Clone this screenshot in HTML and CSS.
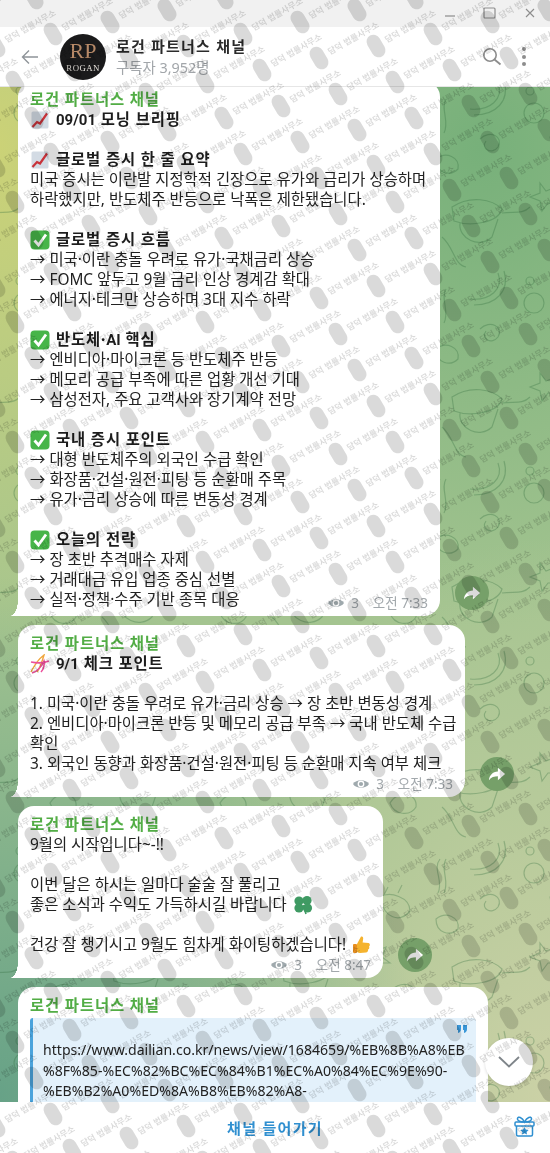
FILE: index.html
```html
<!DOCTYPE html>
<html lang="ko">
<head>
    <meta charset="UTF-8" />
    <title>로건 파트너스 채널</title>
    <link rel="stylesheet" href="styles.css">
</head>
<body>

<svg class="sprites" width="0" height="0" aria-hidden="true">
    <defs>
        <symbol id="i-chart" viewBox="0 0 18 18">
            <rect x="0.5" y="0.5" width="17" height="17" rx="1.5" fill="#d3dbe4"/>
            <path d="M1.5 16 L6 11 L9 12.5 L16 2.5" fill="none" stroke="#c8333a" stroke-width="2.2"/>
        </symbol>
        <symbol id="i-check" viewBox="0 0 20 20">
            <rect x="0.5" y="0.5" width="19" height="19" rx="4" fill="#47b549"/>
            <path d="M4.5 10.5 L8.5 15 L16 4.5" fill="none" stroke="#fff" stroke-width="2.8"/>
        </symbol>
        <symbol id="i-ribbon" viewBox="0 0 20 20">
            <path d="M1 18 C4 12 10 4 14 1 C12 8 10 14 7 18" fill="none" stroke="#f0a63c" stroke-width="1.4"/>
            <path d="M1 8 C6 9 14 9 19 7 M2 19 C7 18 12 12 14 7 C15 11 13 16 11 18" fill="none" stroke="#ec4f9b" stroke-width="1.6"/>
        </symbol>
        <symbol id="i-eye" viewBox="0 0 18 12">
            <path d="M1 6 C4 1 14 1 17 6 C14 11 4 11 1 6 Z" fill="#9fa9ad"/>
            <circle cx="9" cy="6" r="3.4" fill="#fff"/>
            <circle cx="9" cy="6" r="2.1" fill="#9fa9ad"/>
        </symbol>
        <symbol id="i-forward" viewBox="0 0 20 20">
            <path d="M11 3 L19 10 L11 17 L11 12.6 C7 12.6 3.5 13.6 1 17 C1.6 11.4 5 7.6 11 7.2 Z" fill="#fff"/>
        </symbol>
        <g id="wm">
            <g transform="rotate(-30)">
                <rect x="-7" y="-12" width="14" height="24" rx="7" fill="#000"/>
                <text class="wm-text" x="11" y="3">담덕 법률사무소</text>
            </g>
        </g>
        <g id="wm-tile">
            <use href="#wm" x="0" y="0"/>
            <use href="#wm" x="133" y="12"/>
            <use href="#wm" x="76" y="24"/>
            <use href="#wm" x="19" y="36"/>
            <use href="#wm" x="152" y="48"/>
            <use href="#wm" x="95" y="60"/>
            <use href="#wm" x="38" y="72"/>
            <use href="#wm" x="171" y="84"/>
            <use href="#wm" x="114" y="96"/>
            <use href="#wm" x="57" y="108"/>
        </g>
        <pattern id="wm-pattern" width="190" height="120" patternUnits="userSpaceOnUse" patternTransform="translate(357 250)">
            <use href="#wm-tile" x="-190" y="-120"/>
            <use href="#wm-tile" x="0" y="-120"/>
            <use href="#wm-tile" x="190" y="-120"/>
            <use href="#wm-tile" x="-190" y="0"/>
            <use href="#wm-tile" x="0" y="0"/>
            <use href="#wm-tile" x="190" y="0"/>
            <use href="#wm-tile" x="-190" y="120"/>
            <use href="#wm-tile" x="0" y="120"/>
            <use href="#wm-tile" x="190" y="120"/>
        </pattern>
        <pattern id="doodle" width="170" height="190" patternUnits="userSpaceOnUse" patternTransform="translate(430 90)">
            <g fill="none" stroke="#2f6b3c" stroke-width="1.2">
                <path d="M22 30 C40 18 62 22 72 32 C68 46 40 50 24 44 Z M30 46 C28 62 50 72 62 60 L68 42 M72 36 C84 34 92 38 100 30"/>
                <path d="M12 60 C24 70 24 88 36 90 M130 56 C138 42 158 46 156 60 C150 70 134 68 130 56 Z"/>
                <path d="M68 96 C74 112 60 124 40 122 M74 94 C80 114 66 128 44 128"/>
                <circle cx="100" cy="104" r="4"/>
                <circle cx="104" cy="126" r="10"/>
                <path d="M10 112 C2 122 14 134 8 146 M16 112 C10 122 20 134 14 146"/>
                <path d="M50 152 C60 142 74 150 68 160 C62 168 50 162 56 154"/>
                <path d="M120 150 C130 144 150 150 150 164 C140 176 124 172 120 150 Z M124 148 L128 140 M138 146 L142 138"/>
                <path d="M6 172 C16 164 30 170 28 182 C20 190 6 186 6 172 Z"/>
                <path d="M110 6 L116 14 L126 10 L122 20 L130 26 L118 26 L112 34 L110 24 L100 20 L110 16 Z"/>
            </g>
        </pattern>
    </defs>
</svg>

<div class="page">

    <div class="titlebar">
        <svg class="win-icon" width="12" height="12" viewBox="0 0 12 12"><path d="M1 9 H11" stroke="#8d8d8d" stroke-width="1.2"/></svg>
        <svg class="win-icon" width="14" height="12" viewBox="0 0 14 12"><rect x="1" y="1" width="11" height="10" rx="1" fill="none" stroke="#8d8d8d" stroke-width="1.2"/></svg>
        <svg class="win-icon" width="12" height="12" viewBox="0 0 12 12"><path d="M2 2 L10 10 M10 2 L2 10" stroke="#8d8d8d" stroke-width="1.1"/></svg>
    </div>

    <div class="header">
        <svg class="back" width="18" height="16" viewBox="0 0 18 16"><path d="M17 8 H1.5 M8 1.5 L1.5 8 L8 14.5" fill="none" stroke="#8f9499" stroke-width="1.4"/></svg>
        <svg class="avatar" width="46" height="46" viewBox="0 0 46 46">
            <circle cx="23" cy="23" r="23" fill="#1a1a1b"/>
            <text class="avatar-logo" x="23" y="24">RP</text>
            <text class="avatar-name" x="23" y="37">ROGAN</text>
        </svg>
        <div class="header-info">
            <div class="channel-title">로건 파트너스 채널</div>
            <div class="subs">구독자 3,952명</div>
        </div>
        <svg class="search" width="20" height="20" viewBox="0 0 20 20"><circle cx="8" cy="8" r="6.2" fill="none" stroke="#8d8d8d" stroke-width="1.6"/><path d="M12.5 12.5 L18.5 17.5" stroke="#8d8d8d" stroke-width="1.8"/></svg>
        <div class="dots"><span></span><span></span><span></span></div>
    </div>

    <div class="chat">
        <svg class="doodles" aria-hidden="true"><rect width="100%" height="100%" fill="url(#doodle)"/></svg>

        <div class="row row-first">
            <div class="bubble w1">
                <div class="name">로건 파트너스 채널</div>
                <div class="msg">
                    <b><svg class="emoji chart"><use href="#i-chart"/></svg><span class="num">09/01</span> 모닝 브리핑</b><br>
                    <br>
                    <b><svg class="emoji chart"><use href="#i-chart"/></svg>글로벌 증시 한 줄 요약</b><br>
                    미국 증시는 이란발 지정학적 긴장으로 유가와 금리가 상승하며<br>
                    하락했지만, 반도체주 반등으로 낙폭은 제한됐습니다.<br>
                    <br>
                    <b><svg class="emoji"><use href="#i-check"/></svg>글로벌 증시 흐름</b><br>
                    → 미국·이란 충돌 우려로 유가·국채금리 상승<br>
                    → FOMC 앞두고 9월 금리 인상 경계감 확대<br>
                    → 에너지·테크만 상승하며 3대 지수 하락<br>
                    <br>
                    <b><svg class="emoji"><use href="#i-check"/></svg>반도체·<span class="num">AI</span> 핵심</b><br>
                    → 엔비디아·마이크론 등 반도체주 반등<br>
                    → 메모리 공급 부족에 따른 업황 개선 기대<br>
                    → 삼성전자, 주요 고객사와 장기계약 전망<br>
                    <br>
                    <b><svg class="emoji"><use href="#i-check"/></svg>국내 증시 포인트</b><br>
                    → 대형 반도체주의 외국인 수급 확인<br>
                    → 화장품·건설·원전·피팅 등 순환매 주목<br>
                    → 유가·금리 상승에 따른 변동성 경계<br>
                    <br>
                    <b><svg class="emoji"><use href="#i-check"/></svg>오늘의 전략</b><br>
                    → 장 초반 추격매수 자제<br>
                    → 거래대금 유입 업종 중심 선별<br>
                    → 실적·정책·수주 기반 종목 대응
                </div>
                <div class="meta meta-inline"><svg class="eye"><use href="#i-eye"/></svg><span class="views">3</span><span>오전 7:33</span></div>
            </div>
            <div class="fwd"><svg width="18" height="18"><use href="#i-forward"/></svg></div>
        </div>

        <div class="row">
            <div class="bubble w2">
                <div class="name">로건 파트너스 채널</div>
                <div class="msg">
                    <b><svg class="emoji"><use href="#i-ribbon"/></svg><span class="num">9/1</span> 체크 포인트</b><br>
                    <br>
                    1. 미국·이란 충돌 우려로 유가·금리 상승 → 장 초반 변동성 경계<br>
                    2. 엔비디아·마이크론 반등 및 메모리 공급 부족 → 국내 반도체 수급<br>
                    확인<br>
                    3. 외국인 동향과 화장품·건설·원전·피팅 등 순환매 지속 여부 체크
                </div>
                <div class="meta"><svg class="eye"><use href="#i-eye"/></svg><span class="views">3</span><span>오전 7:33</span></div>
            </div>
            <div class="fwd"><svg width="18" height="18"><use href="#i-forward"/></svg></div>
        </div>

        <div class="row">
            <div class="bubble w3">
                <div class="name">로건 파트너스 채널</div>
                <div class="msg">
                    9월의 시작입니다~-!!<br>
                    <br>
                    이번 달은 하시는 일마다 술술 잘 풀리고<br>
                    좋은 소식과 수익도 가득하시길 바랍니다
                    <svg class="emoji after" viewBox="0 0 20 20"><g fill="#3f9a63"><circle cx="6" cy="6" r="4.6"/><circle cx="14" cy="5.5" r="4.6"/><circle cx="6" cy="13" r="4.6"/><circle cx="14.5" cy="13" r="4.6"/></g><path d="M10 10 L13 19" stroke="#3f9a63" stroke-width="1.6"/></svg><br>
                    <br>
                    건강 잘 챙기시고 9월도 힘차게 화이팅하겠습니다!
                    <svg class="emoji after" viewBox="0 0 20 20"><path d="M5 9 L9 1.5 C11 1 11.6 3 11 5 L10.6 7.5 L16.5 8 C18.4 8.6 18 11 17 11.6 C17.8 13 17 14.4 16 14.6 C16.4 16 15.4 17.4 14 17.6 L8 18 C6 18 5 17 5 16 Z" fill="#f5b32e"/><rect x="1" y="9" width="4" height="9" rx="1" fill="#e88f1f"/></svg>
                </div>
                <div class="meta"><svg class="eye"><use href="#i-eye"/></svg><span class="views">3</span><span>오전 8:47</span></div>
            </div>
            <div class="fwd"><svg width="18" height="18"><use href="#i-forward"/></svg></div>
        </div>

        <div class="row">
            <div class="bubble w4 clipped">
                <div class="name">로건 파트너스 채널</div>
                <div class="quote">
                    <svg class="quote-mark" width="10" height="8" viewBox="0 0 10 8"><path d="M0 0 H4 V4 C4 6 3 7.4 1 8 L1 5 H0 Z M6 0 H10 V4 C10 6 9 7.4 7 8 L7 5 H6 Z" fill="#3a97d8"/></svg>
                    https://www.dailian.co.kr/news/view/1684659/%EB%8B%A8%EB<br>
                    %8F%85-%EC%82%BC%EC%84%B1%EC%A0%84%EC%9E%90-<br>
                    %EB%B2%A0%ED%8A%B8%EB%82%A8-
                </div>
            </div>
        </div>

        <div class="scroll-down">
            <svg width="24" height="14" viewBox="0 0 24 14"><path d="M2 2 L12 11.5 L22 2" fill="none" stroke="#7f858a" stroke-width="1.8"/></svg>
        </div>
    </div>

    <div class="footer">
        <span></span>
        <span class="join">채널 들어가기</span>
        <svg class="gift" width="21" height="21" viewBox="0 0 21 21">
            <g fill="none" stroke="#2f8fd0" stroke-width="1.5">
                <rect x="1" y="6" width="19" height="4" rx="1"/>
                <path d="M2.5 10 V18.5 C2.5 19.5 3 20 4 20 H17 C18 20 18.5 19.5 18.5 18.5 V10"/>
                <path d="M10.5 6 C8 1 4 0 3.5 2.5 C3 5 7 6 10.5 6 C14 6 18 5 17.5 2.5 C17 0 13 1 10.5 6 Z"/>
            </g>
            <path d="M10.5 11 L11.8 13.6 L14.6 14 L12.6 15.9 L13 18.6 L10.5 17.3 L8 18.6 L8.4 15.9 L6.4 14 L9.2 13.6 Z" fill="#2f8fd0"/>
        </svg>
    </div>

    <svg class="watermark" aria-hidden="true"><rect width="100%" height="100%" fill="url(#wm-pattern)"/></svg>
</div>

</body>
</html>
```

FILE: styles.css
```css
* {
    box-sizing: border-box;
}
html, body {
    margin: 0;
    padding: 0;
}
body {
    font-family: "Noto Sans", "Noto Sans CJK KR", sans-serif;
    font-size: 15.4px;
    line-height: 20px;
    color: #222;
    background: #fff;
}
.sprites {
    position: absolute;
}
.page {
    position: relative;
    width: 550px;
    height: 1153px;
    display: flex;
    flex-direction: column;
    overflow: hidden;
    filter: blur(0.35px);
}

/* top */
.titlebar {
    height: 27px;
    background: #f1f1f1;
    display: flex;
    justify-content: flex-end;
    align-items: flex-start;
    gap: 27px;
    padding: 7px 14px 0 0;
}
.win-icon {
    display: block;
}
.header {
    height: 60px;
    background: #fff;
    display: flex;
    align-items: center;
    padding: 0 0 0 21px;
    position: relative;
    z-index: 2;
    border-bottom: 1px solid #e6e6e6;
}
.back {
    margin-right: 21px;
}
.avatar {
    margin-right: 10px;
    flex-shrink: 0;
}
.avatar-logo {
    font-family: "Liberation Serif", serif;
    font-size: 22px;
    fill: #b78a68;
    text-anchor: middle;
}
.avatar-name {
    font-family: "Liberation Serif", serif;
    font-size: 8.8px;
    letter-spacing: 0.4px;
    fill: #e8e4de;
    text-anchor: middle;
}
.header-info {
    flex: 1;
}
.channel-title {
    font-size: 15px;
    font-weight: 700;
    letter-spacing: 1.2px;
    color: #2b2b2b;
    line-height: 22px;
}
.subs {
    color: #a2a6aa;
    font-size: 14.4px;
    line-height: 22px;
}
.search {
    margin-right: 20px;
}
.dots {
    display: flex;
    flex-direction: column;
    gap: 3.5px;
    margin-right: 24px;
}
.dots span {
    width: 4px;
    height: 4px;
    border-radius: 50%;
    background: #8d8d8d;
}

/* chat */
.chat {
    position: relative;
    flex: 1;
    min-height: 0;
    overflow: hidden;
    display: flex;
    flex-direction: column;
    gap: 9px;
    padding-left: 18px;
    background:
        radial-gradient(ellipse 260px 520px at 0 60px, #cbd277 0%, rgba(203, 210, 119, 0) 100%),
        radial-gradient(ellipse 420px 520px at 0 1010px, #67a287 0%, rgba(103, 162, 135, 0) 100%),
        radial-gradient(ellipse 380px 560px at 550px 1010px, #cbd1a6 0%, rgba(203, 209, 166, 0) 100%),
        radial-gradient(ellipse 420px 480px at 480px 60px, #77b07a 0%, rgba(119, 176, 122, 0) 100%),
        #a4c490;
}
.chat > .doodles {
    position: absolute;
    inset: 0;
    width: 100%;
    height: 100%;
    opacity: 0.3;
}
.row {
    position: relative;
    display: flex;
    align-items: flex-end;
    flex-shrink: 0;
}
.row-first {
    margin-top: -6px;
}
.bubble {
    position: relative;
    background: #fff;
    border-radius: 16px 16px 16px 0;
    padding: 9px 12px 3px;
    white-space: nowrap;
}
.bubble::before {
    content: "";
    position: absolute;
    left: -8px;
    bottom: 0;
    width: 8px;
    height: 16px;
    background: radial-gradient(ellipse 8px 16px at 0 0, transparent 97%, #fff 100%);
}
.bubble.clipped::before {
    display: none;
}
.w1 {
    width: 422px;
}
.w2 {
    width: 447px;
}
.w3 {
    width: 365px;
}
.w4 {
    width: 470px;
    padding-bottom: 30px;
}
.name {
    color: #52ad45;
    font-weight: 700;
    letter-spacing: 0.85px;
}
.msg b {
    letter-spacing: 0.85px;
    color: #1d1d1d;
}
.num {
    font-family: Roboto, sans-serif;
    font-size: 15px;
    letter-spacing: 0;
}
.emoji {
    width: 20px;
    height: 20px;
    vertical-align: top;
    margin-right: 6px;
}
.emoji.chart {
    width: 18px;
    margin: 0 7px 0 1px;
}
.emoji.after {
    margin: 0 0 0 2px;
}
.meta {
    display: flex;
    justify-content: flex-end;
    align-items: center;
    gap: 6px;
    font-size: 13.5px;
    color: #a2a8ac;
    height: 20px;
}
.meta-inline {
    margin-top: -17px;
}
.views {
    margin-right: 8px;
}
.eye {
    width: 18px;
    height: 12px;
}
.fwd {
    width: 34px;
    height: 34px;
    margin: 0 0 6px 15px;
    border-radius: 50%;
    background: #76a069;
    display: flex;
    align-items: center;
    justify-content: center;
    flex-shrink: 0;
}
.quote {
    position: relative;
    margin-top: 2px;
    background: #e3f1fb;
    border-left: 3px solid #4aa3dc;
    border-radius: 3px;
    padding: 22px 0 20px 10px;
    line-height: 20.5px;
    font-size: 14.1px;
}
.quote-mark {
    position: absolute;
    top: 7px;
    right: 9px;
}
.scroll-down {
    position: absolute;
    right: 17px;
    bottom: 16px;
    width: 48px;
    height: 48px;
    border-radius: 50%;
    background: #fff;
    display: flex;
    align-items: center;
    justify-content: center;
    box-shadow: 0 1px 3px rgba(0, 0, 0, 0.15);
}

/* bottom */
.footer {
    height: 51px;
    background: #fff;
    display: grid;
    grid-template-columns: 1fr auto 1fr;
    align-items: center;
    padding: 0 15px;
}
.join {
    color: #2f8fd0;
    font-weight: 700;
    font-size: 15px;
    letter-spacing: 1.3px;
}
.gift {
    justify-self: end;
    margin-top: -3px;
}

/* repeated mark over the whole picture */
.watermark {
    position: absolute;
    inset: 0;
    width: 100%;
    height: 100%;
    pointer-events: none;
    opacity: 0.14;
    z-index: 5;
}
.wm-text {
    font-family: "Noto Sans CJK KR", sans-serif;
    font-size: 8.5px;
    font-weight: 700;
    fill: #000;
}
```
